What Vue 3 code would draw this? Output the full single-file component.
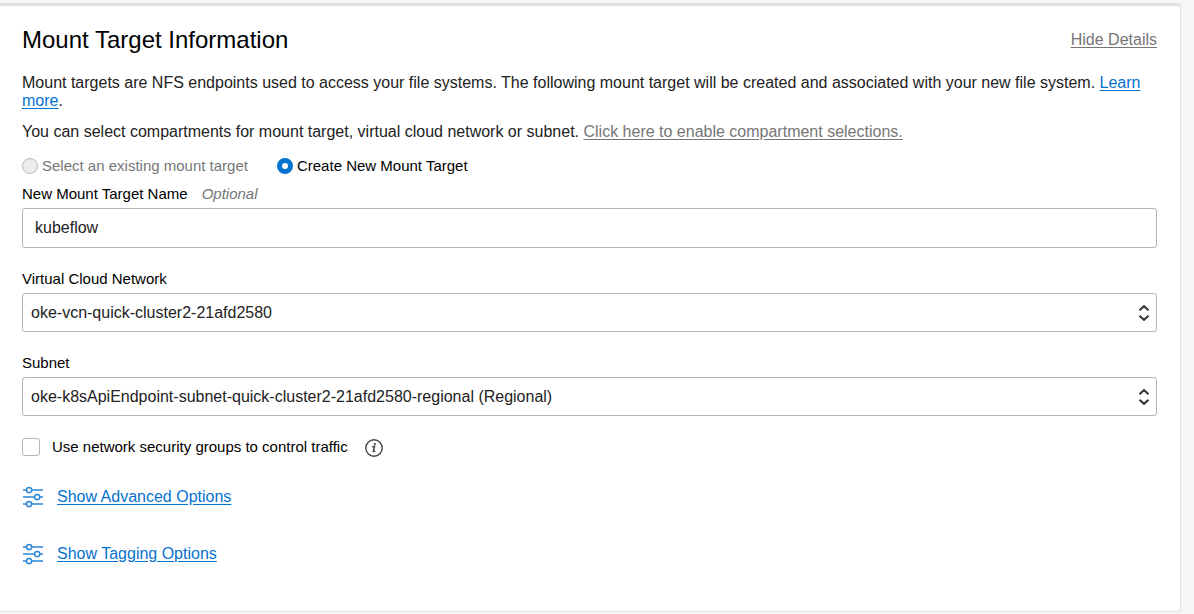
<script setup>
import { ref } from 'vue'

const mode = ref('create')
const name = ref('kubeflow')
const useGroups = ref(false)
const selects = [
  { id: 'vcn', label: 'Virtual Cloud Network', value: 'oke-vcn-quick-cluster2-21afd2580' },
  { id: 'subnet', label: 'Subnet', value: 'oke-k8sApiEndpoint-subnet-quick-cluster2-21afd2580-regional (Regional)' }
]
const options = ['Show Advanced Options', 'Show Tagging Options']
</script>

<template>
  <main class="page">
    <section class="card">
      <header class="head">
        <h2>Mount Target Information</h2>
        <a href="#" class="muted">Hide Details</a>
      </header>
      <p class="intro">
        Mount targets are NFS endpoints used to access your file systems. The following mount target will be created and associated with your new file system. <a href="#">Learn more</a>.
      </p>
      <p class="hint">
        You can select compartments for mount target, virtual cloud network or subnet. <a href="#" class="muted">Click here to enable compartment selections.</a>
      </p>

      <div class="radios">
        <label class="radio disabled">
          <input v-model="mode" type="radio" name="mode" value="existing" disabled />
          Select an existing mount target
        </label>
        <label class="radio">
          <input v-model="mode" type="radio" name="mode" value="create" />
          Create New Mount Target
        </label>
      </div>

      <div class="field">
        <div class="caption"><label for="target-name">New Mount Target Name</label><em>Optional</em></div>
        <input id="target-name" v-model="name" class="box text" type="text" />
      </div>

      <div v-for="s in selects" :key="s.id" class="field">
        <label class="caption" :for="s.id">{{ s.label }}</label>
        <div class="select">
          <select :id="s.id" class="box">
            <option>{{ s.value }}</option>
          </select>
          <svg class="arrows" width="12" height="18" viewBox="0 0 12 18" aria-hidden="true">
            <path d="M1.5 6.2 6 2.2 10.5 6.2M1.5 11.8 6 15.8 10.5 11.8" />
          </svg>
        </div>
      </div>

      <div class="check">
        <input id="groups" v-model="useGroups" type="checkbox" />
        <label for="groups">Use network security groups to control traffic</label>
        <svg class="info" width="18" height="20" viewBox="0 0 18 20" aria-hidden="true">
          <circle cx="9" cy="11" r="8.2" />
          <path d="M7.2 9.7 9.6 9.3 8.3 14Q8.2 15.2 10.3 13.9" />
          <circle class="dot" cx="9.9" cy="7" r="1.1" />
        </svg>
      </div>

      <div v-for="o in options" :key="o" class="option">
        <svg width="22" height="22" viewBox="0 0 22 22" aria-hidden="true">
          <path d="M1 4H4.3M10 4H21M1 11H12.3M18 11H21M1 18H4.3M10 18H21" />
          <circle cx="7.1" cy="4" r="2.6" />
          <circle cx="15.2" cy="11" r="2.6" />
          <circle cx="7.1" cy="18" r="2.6" />
        </svg>
        <a href="#">{{ o }}</a>
      </div>
    </section>
  </main>
</template>

<style>
body {
  background: #f6f6f7;
}
</style>

<style scoped>
.page {
  padding: 3px 13px 0 0;
  font: 16px/18px "Liberation Sans", Arial, sans-serif;
  color: #222;
}
.card {
  padding: 20px 23px 46px 22px;
  background: #fff;
  border: 1px solid #dfdfe5;
  border-top-width: 3px;
  border-left: 0;
  border-radius: 0 4px 4px 0;
}
.head {
  display: flex;
  justify-content: space-between;
  align-items: center;
}
h2 {
  margin: 0;
  font-size: 24px;
  line-height: 28px;
  font-weight: 400;
  color: #000;
}
a {
  color: #0572ce;
  text-underline-offset: 2px;
}
a.muted {
  color: #767676;
}
p {
  margin: 0;
}
.intro {
  margin-top: 20px;
}
.hint {
  margin-top: 13px;
}
.radios {
  display: flex;
  gap: 29px;
  margin-top: 16px;
}
.radio {
  display: flex;
  align-items: center;
  gap: 4px;
  font-size: 15px;
  color: #000;
}
.radio.disabled {
  color: #767676;
}
.radio input {
  appearance: none;
  box-sizing: border-box;
  width: 16px;
  height: 16px;
  margin: 0;
  border: 1px solid #b4b9c1;
  border-radius: 50%;
  background: #ececec;
}
.radio input:checked {
  border: 5px solid #0572ce;
  background: #fff;
}
.field {
  margin-bottom: 22px;
}
.radios + .field {
  margin-top: 10px;
}
.caption {
  display: block;
  margin-bottom: 5px;
  font-size: 15px;
  color: #000;
}
.caption em {
  margin-left: 14px;
  color: #767676;
}
.box {
  display: block;
  box-sizing: border-box;
  width: 100%;
  height: 39px;
  margin: 0;
  padding: 0 8px;
  border: 1px solid #b0b5bf;
  border-radius: 3px;
  background: #fff;
  font: inherit;
  color: #222;
  appearance: none;
}
.box.text {
  height: 40px;
  padding: 0 12px;
}
.select {
  position: relative;
}
.arrows {
  position: absolute;
  top: 11px;
  right: 7px;
  fill: none;
  stroke: #333;
  stroke-width: 2;
  pointer-events: none;
}
.check {
  display: flex;
  align-items: center;
  height: 18px;
  font-size: 15px;
  color: #000;
}
.check input {
  appearance: none;
  box-sizing: border-box;
  width: 18px;
  height: 18px;
  margin: 0 12px 0 0;
  border: 1px solid #b0b5bf;
  border-radius: 3px;
  background: #fff;
}
.check input:checked {
  background: #0572ce;
}
.info {
  margin-left: 17px;
  fill: none;
  stroke: #444;
  stroke-width: 1.4;
}
.info .dot {
  fill: #444;
  stroke: none;
}
.option {
  display: flex;
  align-items: center;
  gap: 13px;
  height: 22px;
  margin-top: 35px;
}
.check + .option {
  margin-top: 30px;
}
.option svg {
  fill: none;
  stroke: #2b86d6;
  stroke-width: 1.5;
}
</style>
